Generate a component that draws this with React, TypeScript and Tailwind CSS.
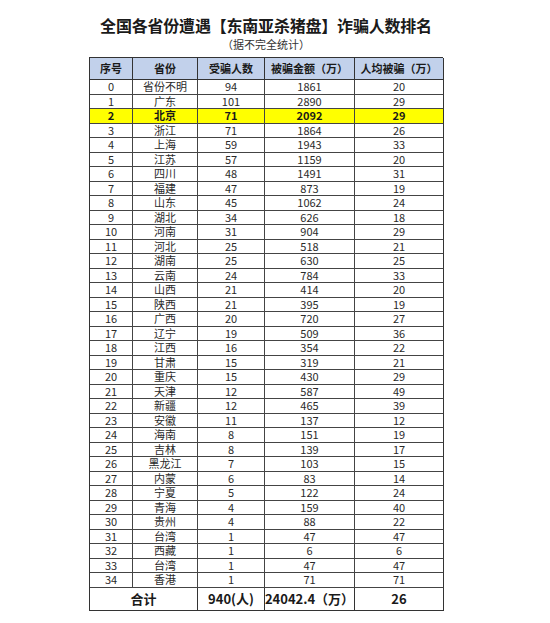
import React from "react";

const rows: [number, string, number, number, number][] = [
  [0, "省份不明", 94, 1861, 20],
  [1, "广东", 101, 2890, 29],
  [2, "北京", 71, 2092, 29],
  [3, "浙江", 71, 1864, 26],
  [4, "上海", 59, 1943, 33],
  [5, "江苏", 57, 1159, 20],
  [6, "四川", 48, 1491, 31],
  [7, "福建", 47, 873, 19],
  [8, "山东", 45, 1062, 24],
  [9, "湖北", 34, 626, 18],
  [10, "河南", 31, 904, 29],
  [11, "河北", 25, 518, 21],
  [12, "湖南", 25, 630, 25],
  [13, "云南", 24, 784, 33],
  [14, "山西", 21, 414, 20],
  [15, "陕西", 21, 395, 19],
  [16, "广西", 20, 720, 27],
  [17, "辽宁", 19, 509, 36],
  [18, "江西", 16, 354, 22],
  [19, "甘肃", 15, 319, 21],
  [20, "重庆", 15, 430, 29],
  [21, "天津", 12, 587, 49],
  [22, "新疆", 12, 465, 39],
  [23, "安徽", 11, 137, 12],
  [24, "海南", 8, 151, 19],
  [25, "吉林", 8, 139, 17],
  [26, "黑龙江", 7, 103, 15],
  [27, "内蒙", 6, 83, 14],
  [28, "宁夏", 5, 122, 24],
  [29, "青海", 4, 159, 40],
  [30, "贵州", 4, 88, 22],
  [31, "台湾", 1, 47, 47],
  [32, "西藏", 1, 6, 6],
  [33, "台湾", 1, 47, 47],
  [34, "香港", 1, 71, 71],
];

const font = { fontFamily: '"Noto Sans CJK SC", "Noto Sans", sans-serif' };

export default function App() {
  return (
    <div className="w-[550px] h-[623px] bg-white text-[#2a2a2a]" style={font}>
      <div className="ml-[89px] w-[354px] pt-[15px] flex flex-col items-center">
        <div className="text-[16px] leading-[20px] font-bold text-[#1a1a1a] whitespace-nowrap tracking-[-0.2px]">
          全国各省份遭遇【东南亚杀猪盘】诈骗人数排名
        </div>
        <div className="mt-[2px] text-[11px] leading-[14px] text-[#333] whitespace-nowrap">
          （据不完全统计）
        </div>
        <div className="mt-[6px] w-[354px] border-l-[1.5px] border-t-[1.5px] border-[#333] grid grid-cols-[43px_65px_67px_90px_89px] text-[11px] leading-none">
          {["序号", "省份", "受骗人数", "被骗金额（万）", "人均被骗（万）"].map((h, i) => (
            <div
              key={h}
              className={`h-[22px] bg-[#c2d1eb] font-bold text-[#1a1a1a] flex items-center justify-center border-b border-[#333] whitespace-nowrap ${i === 4 ? "border-r-[1.5px]" : "border-r"}`}
            >
              {h}
            </div>
          ))}
          {rows.map((r) => {
            const hl = r[0] === 2;
            return r.map((v, i) => (
              <div
                key={`${r[0]}-${i}`}
                className={`h-[14.5px] flex items-center justify-center border-b border-[#444] ${i === 4 ? "border-r-[1.5px] border-r-[#333]" : "border-r"} ${hl ? "bg-[#ffff00] font-bold text-[#1a1a1a]" : ""}`}
              >
                {v}
              </div>
            ));
          })}
          <div className="col-span-2 h-[23px] flex items-center justify-center border-r border-b-[1.5px] border-[#333] font-bold text-[13px] text-[#1a1a1a]">
            合计
          </div>
          <div className="h-[23px] flex items-center justify-center border-r border-b-[1.5px] border-[#333] font-bold text-[13px] text-[#1a1a1a]">
            940(人)
          </div>
          <div className="h-[23px] flex items-center justify-center border-r border-b-[1.5px] border-[#333] font-bold text-[13px] text-[#1a1a1a] whitespace-nowrap">
            24042.4（万）
          </div>
          <div className="h-[23px] flex items-center justify-center border-r-[1.5px] border-b-[1.5px] border-[#333] font-bold text-[13px] text-[#1a1a1a]">
            26
          </div>
        </div>
      </div>
    </div>
  );
}
